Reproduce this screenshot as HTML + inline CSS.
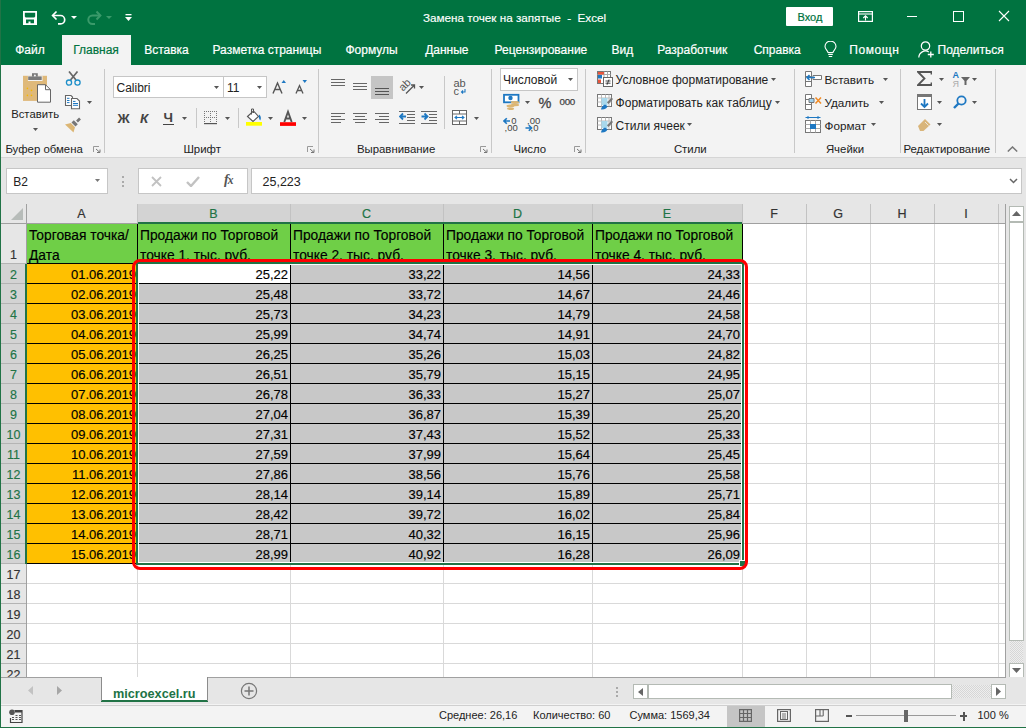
<!DOCTYPE html><html><head><meta charset="utf-8"><style>
*{box-sizing:border-box;margin:0;padding:0}
html,body{width:1026px;height:728px;overflow:hidden;background:#fff;font-family:"Liberation Sans",sans-serif}
.a{position:absolute}
.t{position:absolute;white-space:nowrap;line-height:1}
.r{position:absolute;white-space:nowrap;line-height:1;text-align:right;-webkit-text-stroke:0.15px #000}
</style></head><body><div class="a" style="left:0px;top:0px;width:1026px;height:65px;background:#007340;"></div>
<div class="t" style="left:423px;top:12px;font-size:11.7px;color:#fff;-webkit-text-stroke:0.15px #fff">Замена точек на запятые&nbsp; -&nbsp; Excel</div>
<svg class="a" style="left:22px;top:10px" width="16" height="16" viewBox="0 0 16 16">
      <path fill-rule="evenodd" fill="#fff" d="M1 1H15V15H1Z M2.8 2.8H13.2V6.6L12.3 7.6H3.7L2.8 6.6Z M4 9.4H12V13.2H8.5V11.6H6.5V13.2H4Z"/>
    </svg>
<svg class="a" style="left:51px;top:10px" width="16" height="15" viewBox="0 0 16 15">
      <path d="M2 5.5h7.5a4.2 4.2 0 0 1 0 8.4H7" fill="none" stroke="#fff" stroke-width="1.7"/>
      <path d="M5.5 1.5L1.6 5.5 5.5 9.5" fill="none" stroke="#fff" stroke-width="1.7"/>
    </svg>
<svg class="a" style="left:71px;top:16px" width="6" height="3"><polygon points="0,0 6,0 3,3" fill="#fff"/></svg>
<svg class="a" style="left:86px;top:10px" width="16" height="15" viewBox="0 0 16 15">
      <path d="M14 5.5H6.5a4.2 4.2 0 0 0 0 8.4H9" fill="none" stroke="#3a9a6a" stroke-width="2"/>
      <path d="M10.5 1.5L14.4 5.5 10.5 9.5" fill="none" stroke="#3a9a6a" stroke-width="2"/>
    </svg>
<svg class="a" style="left:106px;top:16px" width="6" height="3"><polygon points="0,0 6,0 3,3" fill="#3a9a6a"/></svg>
<svg class="a" style="left:125px;top:14px" width="7" height="8"><rect x="0.5" y="0" width="6" height="1.3" fill="#fff"/><polygon points="0,3 7,3 3.5,7" fill="#fff"/></svg>
<div class="a" style="left:786px;top:7px;width:47px;height:19px;background:#fff;border-radius:1px"></div>
<div class="t" style="left:797.5px;top:11.8px;font-size:11px;color:#007340;-webkit-text-stroke:0.2px #007340">Вход</div>
<svg class="a" style="left:858px;top:11px" width="15" height="11" viewBox="0 0 15 11">
      <rect x="0.6" y="0.6" width="13.8" height="9.8" fill="none" stroke="#fff" stroke-width="1.2"/>
      <line x1="0.6" y1="3" x2="14.4" y2="3" stroke="#fff" stroke-width="1.1"/>
      <path d="M7.5 9.5V5M5.3 7L7.5 4.8 9.7 7" fill="none" stroke="#fff" stroke-width="1.1"/>
    </svg>
<div class="a" style="left:907px;top:16px;width:10px;height:1px;background:#fff;"></div>
<div class="a" style="left:953px;top:11px;width:11px;height:11px;border:1px solid #fff"></div>
<svg class="a" style="left:998px;top:10px" width="12" height="12"><path d="M1 1L11 11M11 1L1 11" stroke="#fff" stroke-width="1.1"/></svg>
<div class="a" style="left:62px;top:35px;width:69px;height:30px;background:#f3f3f3;"></div>
<div class="t" style="left:15.2px;top:44.2px;font-size:12px;color:#fff;-webkit-text-stroke:0.2px #fff">Файл</div>
<div class="t" style="left:73.2px;top:44.2px;font-size:12px;color:#007340;-webkit-text-stroke:0.2px #007340">Главная</div>
<div class="t" style="left:144.2px;top:44.2px;font-size:12px;color:#fff;-webkit-text-stroke:0.2px #fff">Вставка</div>
<div class="t" style="left:212.5px;top:44.2px;font-size:12px;color:#fff;-webkit-text-stroke:0.2px #fff">Разметка страницы</div>
<div class="t" style="left:345.5px;top:44.2px;font-size:12px;color:#fff;-webkit-text-stroke:0.2px #fff">Формулы</div>
<div class="t" style="left:425.2px;top:44.2px;font-size:12px;color:#fff;-webkit-text-stroke:0.2px #fff">Данные</div>
<div class="t" style="left:494.59999999999997px;top:44.2px;font-size:12px;color:#fff;-webkit-text-stroke:0.2px #fff">Рецензирование</div>
<div class="t" style="left:611.5px;top:44.2px;font-size:12px;color:#fff;-webkit-text-stroke:0.2px #fff">Вид</div>
<div class="t" style="left:657.2px;top:44.2px;font-size:12px;color:#fff;-webkit-text-stroke:0.2px #fff">Разработчик</div>
<div class="t" style="left:753.7px;top:44.2px;font-size:12px;color:#fff;-webkit-text-stroke:0.2px #fff">Справка</div>
<div class="t" style="left:849.2px;top:44.2px;font-size:12px;color:#fff;-webkit-text-stroke:0.2px #fff;letter-spacing:0.6px">Помощн</div>
<div class="t" style="left:937.5px;top:44.2px;font-size:12px;color:#fff;-webkit-text-stroke:0.2px #fff">Поделиться</div>
<svg class="a" style="left:824px;top:41px" width="13" height="17" viewBox="0 0 13 17">
      <path d="M4 11.5C3.8 9.5 1 8.3 1 5.6a5.5 5.5 0 0 1 11 0c0 2.7-2.8 3.9-3 5.9z" fill="none" stroke="#fff" stroke-width="1.1"/>
      <path d="M4.2 13.4h4.6M4.8 15.5h3.4" stroke="#fff" stroke-width="1.1"/>
    </svg>
<svg class="a" style="left:918px;top:41px" width="17" height="17" viewBox="0 0 17 17">
      <circle cx="7.5" cy="5" r="4.2" fill="none" stroke="#fff" stroke-width="1.2"/>
      <path d="M0.8 16.5a6.7 6.7 0 0 1 10-5.6" fill="none" stroke="#fff" stroke-width="1.2"/>
      <path d="M12.8 10.5v6M9.8 13.5h6" stroke="#fff" stroke-width="1.3"/>
    </svg>
<div class="a" style="left:1px;top:65px;width:1025px;height:92px;background:#f3f3f3;"></div>
<div class="a" style="left:1px;top:157px;width:1025px;height:1px;background:#d5d5d5;"></div>
<div class="a" style="left:104px;top:69px;width:1px;height:84px;background:#c8c8c8;"></div>
<div class="a" style="left:318px;top:69px;width:1px;height:84px;background:#c8c8c8;"></div>
<div class="a" style="left:491px;top:69px;width:1px;height:84px;background:#c8c8c8;"></div>
<div class="a" style="left:585px;top:69px;width:1px;height:84px;background:#c8c8c8;"></div>
<div class="a" style="left:794px;top:69px;width:1px;height:84px;background:#c8c8c8;"></div>
<div class="a" style="left:900px;top:69px;width:1px;height:84px;background:#c8c8c8;"></div>
<div class="a" style="left:995px;top:69px;width:1px;height:84px;background:#c8c8c8;"></div>
<div class="t" style="left:5.4px;top:143.8px;font-size:11.4px;color:#222;">Буфер обмена</div>
<div class="t" style="left:183.4px;top:143.8px;font-size:11.4px;color:#222;">Шрифт</div>
<div class="t" style="left:356.9px;top:143.8px;font-size:11.4px;color:#222;">Выравнивание</div>
<div class="t" style="left:513.4px;top:143.8px;font-size:11.4px;color:#222;">Число</div>
<div class="t" style="left:673.9px;top:143.8px;font-size:11.4px;color:#222;">Стили</div>
<div class="t" style="left:825.9px;top:143.8px;font-size:11.4px;color:#222;">Ячейки</div>
<div class="t" style="left:903.4px;top:143.8px;font-size:11.4px;color:#222;">Редактирование</div>
<svg class="a" style="left:93px;top:146px" width="8" height="7" viewBox="0 0 8 7"><path d="M0.5 6V0.5H6" fill="none" stroke="#999" stroke-width="1"/><path d="M3 3L7 6.5M7 3.5v3H4" fill="none" stroke="#777" stroke-width="1"/></svg>
<svg class="a" style="left:307px;top:146px" width="8" height="7" viewBox="0 0 8 7"><path d="M0.5 6V0.5H6" fill="none" stroke="#999" stroke-width="1"/><path d="M3 3L7 6.5M7 3.5v3H4" fill="none" stroke="#777" stroke-width="1"/></svg>
<svg class="a" style="left:480px;top:146px" width="8" height="7" viewBox="0 0 8 7"><path d="M0.5 6V0.5H6" fill="none" stroke="#999" stroke-width="1"/><path d="M3 3L7 6.5M7 3.5v3H4" fill="none" stroke="#777" stroke-width="1"/></svg>
<svg class="a" style="left:574px;top:146px" width="8" height="7" viewBox="0 0 8 7"><path d="M0.5 6V0.5H6" fill="none" stroke="#999" stroke-width="1"/><path d="M3 3L7 6.5M7 3.5v3H4" fill="none" stroke="#777" stroke-width="1"/></svg>
<svg class="a" style="left:1007px;top:146px" width="11" height="6"><path d="M0.8 5.5L5.5 1 10.2 5.5" fill="none" stroke="#777" stroke-width="1.5"/></svg>
<svg class="a" style="left:22px;top:72px" width="31" height="32" viewBox="0 0 31 32">
      <rect x="1" y="3.8" width="24" height="25.1" fill="#dfb97a"/>
      <rect x="5.9" y="3.8" width="14.6" height="5.2" fill="#f3f3f3"/>
      <rect x="6.2" y="4.4" width="13.5" height="3.6" fill="#7a7a7a"/>
      <rect x="10" y="1.2" width="5.8" height="3.4" fill="#7a7a7a"/>
      <circle cx="12.9" cy="3.6" r="1" fill="#f3f3f3"/>
      <path d="M15.5 12.7H23.5L28.5 17.7V30.2H15.5Z" fill="#fff" stroke="#666" stroke-width="1"/>
      <path d="M23.5 12.7V17.7H28.5" fill="none" stroke="#666" stroke-width="1"/>
      <circle cx="5.4" cy="16.4" r="0.8" fill="#f5b800"/><circle cx="9.5" cy="18.4" r="0.8" fill="#f5b800"/>
      <circle cx="5.4" cy="23.4" r="0.8" fill="#f5b800"/><circle cx="9.5" cy="23.4" r="0.8" fill="#f5b800"/>
    </svg>
<div class="t" style="left:11.2px;top:108.5px;font-size:11.3px;color:#222;">Вставить</div>
<svg class="a" style="left:33.0px;top:128.0px" width="5" height="3"><polygon points="0,0 5,0 2.5,3" fill="#555"/></svg>
<svg class="a" style="left:65px;top:71px" width="17" height="16" viewBox="0 0 17 16">
      <path d="M4 0.5L11 9M12.5 0.5L5.5 9" stroke="#666" stroke-width="1.7"/>
      <circle cx="4" cy="11.6" r="2.6" fill="none" stroke="#1e8fc9" stroke-width="1.3"/>
      <circle cx="12.5" cy="11.6" r="2.6" fill="none" stroke="#1e8fc9" stroke-width="1.3"/>
    </svg>
<svg class="a" style="left:64px;top:94px" width="17" height="16" viewBox="0 0 17 16">
      <path d="M1.5 1.5h5.5l1.5 1.5v8.5h-7z" fill="#fff" stroke="#666" stroke-width="1.1"/>
      <path d="M7.5 4.5h5.5l2.5 2.5v7.8h-8z" fill="#fff" stroke="#666" stroke-width="1.1"/>
      <path d="M3 4.3h2.5M3 6.5h2.5M3 8.6h2.5M9 7.4h2.5M9 9.5h5M9 11.3h5" stroke="#1e78c2" stroke-width="1"/>
    </svg>
<svg class="a" style="left:87.0px;top:100.5px" width="5" height="3"><polygon points="0,0 5,0 2.5,3" fill="#555"/></svg>
<svg class="a" style="left:64px;top:117px" width="18" height="16" viewBox="0 0 18 16">
      <path d="M13 4.5L16 1.5" stroke="#777" stroke-width="2.6"/>
      <path d="M7.5 5.5L11.5 9.5L13.8 7.2L9.8 3.2z" fill="#777"/>
      <path d="M1 7.5L6.8 6 11 10.2 9.5 15.5z" fill="#dcb674"/>
    </svg>
<div class="a" style="left:113px;top:76px;width:111px;height:22px;background:#fff;border:1px solid #c6c6c6"></div>
<div class="a" style="left:223px;top:76px;width:44px;height:22px;background:#fff;border:1px solid #c6c6c6"></div>
<div class="t" style="left:116.5px;top:81.6px;font-size:12px;color:#222;">Calibri</div>
<div class="t" style="left:227px;top:81.6px;font-size:12px;color:#222;">11</div>
<svg class="a" style="left:214.0px;top:85.5px" width="5" height="3"><polygon points="0,0 5,0 2.5,3" fill="#555"/></svg>
<svg class="a" style="left:257.0px;top:85.5px" width="5" height="3"><polygon points="0,0 5,0 2.5,3" fill="#555"/></svg>
<svg class="a" style="left:272px;top:80px" width="14" height="14" viewBox="0 0 14 14"><path d="M1 13.5L5.5 3 10 13.5M2.8 9.5h5.4" fill="none" stroke="#555" stroke-width="1.4"/><polygon points="9.5,3 14,3 11.75,0" fill="#1e78c2"/></svg>
<svg class="a" style="left:295px;top:80px" width="12" height="14" viewBox="0 0 12 14"><path d="M1 13.5L4.5 5.5 8 13.5M2.3 10.5h4.4" fill="none" stroke="#555" stroke-width="1.3"/><polygon points="7.5,0 12,0 9.75,3" fill="#1e78c2"/></svg>
<div class="t" style="left:117.5px;top:111.5px;font-size:13.5px;color:#444;font-weight:bold">Ж</div>
<div class="t" style="left:140px;top:111.5px;font-size:13.5px;color:#444;font-weight:bold;font-style:italic">К</div>
<div class="t" style="left:163.5px;top:110.5px;font-size:13.5px;color:#444;font-weight:bold">Ч</div>
<div class="a" style="left:163px;top:124px;width:11px;height:1px;background:#444;"></div>
<svg class="a" style="left:182.0px;top:116.5px" width="5" height="3"><polygon points="0,0 5,0 2.5,3" fill="#555"/></svg>
<div class="a" style="left:196px;top:108px;width:1px;height:20px;background:#c8c8c8;"></div>
<svg class="a" style="left:204px;top:111px" width="14" height="14" viewBox="0 0 14 14"><g fill="#777"><rect x="0" y="0" width="1" height="1"/><rect x="2" y="0" width="1" height="1"/><rect x="4" y="0" width="1" height="1"/><rect x="6" y="0" width="1" height="1"/><rect x="8" y="0" width="1" height="1"/><rect x="10" y="0" width="1" height="1"/><rect x="12" y="0" width="1" height="1"/><rect x="0" y="2" width="1" height="1"/><rect x="6" y="2" width="1" height="1"/><rect x="12" y="2" width="1" height="1"/><rect x="0" y="4" width="1" height="1"/><rect x="6" y="4" width="1" height="1"/><rect x="12" y="4" width="1" height="1"/><rect x="0" y="6" width="1" height="1"/><rect x="2" y="6" width="1" height="1"/><rect x="4" y="6" width="1" height="1"/><rect x="6" y="6" width="1" height="1"/><rect x="8" y="6" width="1" height="1"/><rect x="10" y="6" width="1" height="1"/><rect x="12" y="6" width="1" height="1"/><rect x="0" y="8" width="1" height="1"/><rect x="6" y="8" width="1" height="1"/><rect x="12" y="8" width="1" height="1"/><rect x="0" y="10" width="1" height="1"/><rect x="6" y="10" width="1" height="1"/><rect x="12" y="10" width="1" height="1"/></g><rect x="0" y="12" width="13" height="1.2" fill="#555"/></svg>
<svg class="a" style="left:224.5px;top:116.5px" width="5" height="3"><polygon points="0,0 5,0 2.5,3" fill="#555"/></svg>
<div class="a" style="left:238px;top:108px;width:1px;height:20px;background:#c8c8c8;"></div>
<svg class="a" style="left:245px;top:108px" width="18" height="19" viewBox="0 0 18 19"><path d="M2.5 8.5L8.5 3 13.5 8.5 8 13.5z" fill="#fff" stroke="#555" stroke-width="1.1"/><path d="M6.5 1v5.5M6.5 1h2v4" fill="none" stroke="#555" stroke-width="1"/><path d="M14 6.5c1.8 1.2 2.5 3.5 1.2 6-1-1-1.8-3.5-1.2-6z" fill="#1e78c2"/><rect x="1" y="14" width="16" height="3.7" fill="#ffff00"/></svg>
<svg class="a" style="left:267.5px;top:116.5px" width="5" height="3"><polygon points="0,0 5,0 2.5,3" fill="#555"/></svg>
<svg class="a" style="left:280px;top:109px" width="17" height="18" viewBox="0 0 17 18"><path d="M4.3 13L8 2.8 11.7 13M5.6 9.5h4.8" fill="none" stroke="#555" stroke-width="1.9"/><rect x="0" y="13.2" width="16" height="3.7" fill="#f00"/></svg>
<svg class="a" style="left:302.0px;top:116.5px" width="5" height="3"><polygon points="0,0 5,0 2.5,3" fill="#555"/></svg>
<div class="a" style="left:331px;top:79px;width:14px;height:1.3px;background:#666;"></div>
<div class="a" style="left:331px;top:82px;width:14px;height:1.3px;background:#666;"></div>
<div class="a" style="left:331px;top:85px;width:14px;height:1.3px;background:#666;"></div>
<div class="a" style="left:353px;top:83px;width:14px;height:1.3px;background:#666;"></div>
<div class="a" style="left:353px;top:86px;width:14px;height:1.3px;background:#666;"></div>
<div class="a" style="left:353px;top:89px;width:14px;height:1.3px;background:#666;"></div>
<div class="a" style="left:371px;top:76px;width:22px;height:23px;background:#c5c5c5;"></div>
<div class="a" style="left:375px;top:88px;width:14px;height:1.3px;background:#555;"></div>
<div class="a" style="left:375px;top:91px;width:14px;height:1.3px;background:#555;"></div>
<div class="a" style="left:375px;top:94px;width:14px;height:1.3px;background:#555;"></div>
<svg class="a" style="left:397px;top:76px" width="20" height="19" viewBox="0 0 20 19"><text x="1.5" y="13" font-family="Liberation Sans" font-size="11" fill="#555" transform="rotate(-45 7 9)">ab</text><path d="M9 17.5L17 9.5M14 9h3.5v3.5" fill="none" stroke="#555" stroke-width="1.3"/></svg>
<svg class="a" style="left:419.0px;top:85.5px" width="5" height="3"><polygon points="0,0 5,0 2.5,3" fill="#555"/></svg>
<div class="a" style="left:331px;top:113px;width:14px;height:1px;background:#666;"></div>
<div class="a" style="left:331px;top:116px;width:10px;height:1px;background:#666;"></div>
<div class="a" style="left:331px;top:119px;width:14px;height:1px;background:#666;"></div>
<div class="a" style="left:331px;top:122px;width:10px;height:1px;background:#666;"></div>
<div class="a" style="left:353px;top:113px;width:14px;height:1px;background:#666;"></div>
<div class="a" style="left:355px;top:116px;width:10px;height:1px;background:#666;"></div>
<div class="a" style="left:353px;top:119px;width:14px;height:1px;background:#666;"></div>
<div class="a" style="left:355px;top:122px;width:10px;height:1px;background:#666;"></div>
<div class="a" style="left:375px;top:113px;width:14px;height:1px;background:#666;"></div>
<div class="a" style="left:379px;top:116px;width:10px;height:1px;background:#666;"></div>
<div class="a" style="left:375px;top:119px;width:14px;height:1px;background:#666;"></div>
<div class="a" style="left:379px;top:122px;width:10px;height:1px;background:#666;"></div>
<div class="a" style="left:399px;top:111px;width:16px;height:1px;background:#666;"></div>
<div class="a" style="left:399px;top:123px;width:16px;height:1px;background:#666;"></div>
<div class="a" style="left:407px;top:114px;width:8px;height:1px;background:#666;"></div>
<div class="a" style="left:407px;top:117px;width:8px;height:1px;background:#666;"></div>
<div class="a" style="left:407px;top:120px;width:8px;height:1px;background:#666;"></div>
<svg class="a" style="left:399px;top:110px" width="8" height="13" viewBox="0 0 8 13"><path d="M1 6.5h6M4 3.5L1 6.5 4 9.5" fill="none" stroke="#1e78c2" stroke-width="1.8"/></svg>
<div class="a" style="left:421px;top:111px;width:16px;height:1px;background:#666;"></div>
<div class="a" style="left:421px;top:123px;width:16px;height:1px;background:#666;"></div>
<div class="a" style="left:429px;top:114px;width:8px;height:1px;background:#666;"></div>
<div class="a" style="left:429px;top:117px;width:8px;height:1px;background:#666;"></div>
<div class="a" style="left:429px;top:120px;width:8px;height:1px;background:#666;"></div>
<svg class="a" style="left:421px;top:110px" width="8" height="13" viewBox="0 0 8 13"><path d="M0.5 6.5h6M3.5 3.5L6.5 6.5 3.5 9.5" fill="none" stroke="#1e78c2" stroke-width="1.8"/></svg>
<div class="a" style="left:444px;top:76px;width:1px;height:53px;background:#c8c8c8;"></div>
<svg class="a" style="left:453px;top:77px" width="16" height="19" viewBox="0 0 16 19"><text x="0.5" y="9.5" font-family="Liberation Sans" font-size="11" fill="#555">ab</text><text x="0.5" y="17.5" font-family="Liberation Sans" font-size="11" fill="#555">c</text><path d="M12 12v3h-3.5M10 13.5l-1.5 1.5 1.5 1.5" fill="none" stroke="#1e78c2" stroke-width="1.1"/></svg>
<svg class="a" style="left:452px;top:110px" width="15" height="15" viewBox="0 0 15 15"><rect x="0.5" y="0.5" width="14" height="14" fill="#fff" stroke="#666" stroke-width="1"/><path d="M0.5 4h14M0.5 11h14M7.5 0.5v3.5M7.5 11v3.5" stroke="#666" stroke-width="1"/><path d="M3 7.5h9M5 5.8L3 7.5 5 9.2M10 5.8L12 7.5 10 9.2" fill="none" stroke="#1e78c2" stroke-width="1.1"/></svg>
<svg class="a" style="left:474.0px;top:116.5px" width="5" height="3"><polygon points="0,0 5,0 2.5,3" fill="#555"/></svg>
<div class="a" style="left:500px;top:68px;width:78px;height:23px;background:#fff;border:1px solid #c6c6c6"></div>
<div class="t" style="left:503px;top:73.6px;font-size:12px;color:#222;">Числовой</div>
<svg class="a" style="left:568.0px;top:78.0px" width="5" height="3"><polygon points="0,0 5,0 2.5,3" fill="#555"/></svg>
<svg class="a" style="left:502px;top:93px" width="19" height="18" viewBox="0 0 19 18"><rect x="2" y="1.8" width="14.5" height="7.5" fill="#fff" stroke="#1e78c2" stroke-width="1.8"/><circle cx="8.5" cy="5" r="2.2" fill="#1e78c2"/><ellipse cx="13" cy="9.5" rx="4.2" ry="1.4" fill="#dcb674"/><ellipse cx="13" cy="12" rx="4.2" ry="1.2" fill="#dcb674"/><ellipse cx="8.5" cy="13" rx="4" ry="1.4" fill="#dcb674"/><ellipse cx="8.5" cy="15.8" rx="3.6" ry="1.2" fill="#dcb674"/></svg>
<svg class="a" style="left:525.0px;top:100.5px" width="5" height="3"><polygon points="0,0 5,0 2.5,3" fill="#555"/></svg>
<div class="t" style="left:538.5px;top:96px;font-size:14.5px;color:#444;-webkit-text-stroke:0.3px #444">%</div>
<div class="t" style="left:559.5px;top:96.5px;font-size:9.8px;color:#444;-webkit-text-stroke:0.25px #444;letter-spacing:-0.3px">000</div>
<svg class="a" style="left:503px;top:116px" width="16" height="17" viewBox="0 0 16 17"><path d="M1 5h6M3.8 2.2L1 5 3.8 7.8" fill="none" stroke="#1e78c2" stroke-width="1.6"/><text x="8.3" y="8" font-family="Liberation Sans" font-size="9.5" fill="#444">0</text><text x="1.5" y="15" font-family="Liberation Sans" font-size="9.5" fill="#444">,00</text></svg>
<svg class="a" style="left:525px;top:116px" width="16" height="17" viewBox="0 0 16 17"><text x="2" y="8" font-family="Liberation Sans" font-size="9.5" fill="#444">,00</text><path d="M0.5 12h6M3.8 9.2L6.6 12 3.8 14.8" fill="none" stroke="#1e78c2" stroke-width="1.6"/><text x="5.5" y="15" font-family="Liberation Sans" font-size="9.5" fill="#444">,0</text></svg>
<div class="a" style="left:585px;top:69px;width:1px;height:84px;background:#c8c8c8;"></div>
<svg class="a" style="left:596px;top:70px" width="18" height="18" viewBox="0 0 18 18"><rect x="1.5" y="1.5" width="13" height="12" fill="#fff" stroke="#777" stroke-width="1"/><path d="M1.5 4.5h13M8 1.5v12M11.5 1.5v12" stroke="#aaa" stroke-width="1"/><rect x="2" y="2" width="6" height="2.5" fill="#e8553c"/><rect x="2" y="5" width="4" height="3.5" fill="#1e78c2"/><rect x="2" y="9.5" width="3" height="3.5" fill="#e8553c"/><rect x="7.5" y="7.5" width="9" height="9" fill="#fff" stroke="#666" stroke-width="1"/><path d="M9.5 11h5M9.5 13.2h5M13 9.5L11 14.8" stroke="#333" stroke-width="0.9"/></svg>
<svg class="a" style="left:596px;top:93px" width="18" height="18" viewBox="0 0 18 18"><rect x="1.5" y="1.5" width="14" height="12" fill="#fff" stroke="#777" stroke-width="1"/><path d="M1.5 5h14M1.5 9h14M5.5 1.5v12M9.5 1.5v12M13 1.5v12" stroke="#bbb" stroke-width="1"/><rect x="5.5" y="5" width="6" height="7" fill="#a8d8ec"/><path d="M11 9.5L15.5 4.5 17 6 12.5 11z" fill="#777"/><path d="M5 16.5c0.3-2.5 2-4.5 4-5l2.5 1.5c-0.5 2.2-2.5 3.8-6.5 3.5z" fill="#1e78c2"/></svg>
<svg class="a" style="left:596px;top:116px" width="18" height="18" viewBox="0 0 18 18"><rect x="1.5" y="1.5" width="14" height="12" fill="#fff" stroke="#777" stroke-width="1"/><path d="M1.5 5h14M1.5 9h14M5.5 1.5v12M9.5 1.5v12M13 1.5v12" stroke="#bbb" stroke-width="1"/><rect x="5.5" y="5" width="6" height="7" fill="#a8d8ec"/><path d="M11 9.5L15.5 4.5 17 6 12.5 11z" fill="#777"/><path d="M5 16.5c0.3-2.5 2-4.5 4-5l2.5 1.5c-0.5 2.2-2.5 3.8-6.5 3.5z" fill="#1e78c2"/></svg>
<div class="t" style="left:615.6px;top:74px;font-size:12px;color:#222;">Условное форматирование</div>
<svg class="a" style="left:771.0px;top:78.0px" width="5" height="3"><polygon points="0,0 5,0 2.5,3" fill="#555"/></svg>
<div class="t" style="left:615.6px;top:97px;font-size:12px;color:#222;">Форматировать как таблицу</div>
<svg class="a" style="left:775.0px;top:100.5px" width="5" height="3"><polygon points="0,0 5,0 2.5,3" fill="#555"/></svg>
<div class="t" style="left:615.6px;top:119.5px;font-size:12px;color:#222;">Стили ячеек</div>
<svg class="a" style="left:686.5px;top:123.0px" width="5" height="3"><polygon points="0,0 5,0 2.5,3" fill="#555"/></svg>
<svg class="a" style="left:805px;top:71px" width="17" height="16" viewBox="0 0 17 16"><path d="M0.5 0.5h6v15h-6zM0.5 5.5h6M0.5 10.5h6" fill="#fff" stroke="#777" stroke-width="1"/><path d="M8 4.5h8.5v4H8z" fill="#fff" stroke="#777" stroke-width="1"/><path d="M2 6.5h8M4.5 4L2 6.5 4.5 9" fill="none" stroke="#1e78c2" stroke-width="1.5"/></svg>
<svg class="a" style="left:805px;top:94px" width="17" height="16" viewBox="0 0 17 16"><path d="M0.5 0.5h6v15h-6zM0.5 5.5h6M0.5 10.5h6" fill="#fff" stroke="#777" stroke-width="1"/><path d="M4 4.5h5v4H4z" fill="#9fd0ec" stroke="#777" stroke-width="1"/><path d="M10.5 3.5l5.5 6M16 3.5l-5.5 6" stroke="#f08a24" stroke-width="1.5"/></svg>
<svg class="a" style="left:805px;top:116px" width="17" height="17" viewBox="0 0 17 17"><path d="M0.5 1.5h15M3 0v3M13 0v3" stroke="#1e78c2" stroke-width="1"/><rect x="0.5" y="4.5" width="15" height="12" fill="#fff" stroke="#777" stroke-width="1"/><path d="M0.5 8.5h15M0.5 12.5h15M5.5 4.5v12M10.5 4.5v12" stroke="#aaa" stroke-width="1"/><rect x="5" y="8" width="6" height="5" fill="#1e78c2"/></svg>
<div class="t" style="left:824.5px;top:74px;font-size:11.7px;color:#222;">Вставить</div>
<svg class="a" style="left:883.0px;top:78.0px" width="5" height="3"><polygon points="0,0 5,0 2.5,3" fill="#555"/></svg>
<div class="t" style="left:824.5px;top:97px;font-size:11.7px;color:#222;">Удалить</div>
<svg class="a" style="left:879.0px;top:100.5px" width="5" height="3"><polygon points="0,0 5,0 2.5,3" fill="#555"/></svg>
<div class="t" style="left:824.5px;top:119.5px;font-size:11.7px;color:#222;">Формат</div>
<svg class="a" style="left:871.0px;top:123.0px" width="5" height="3"><polygon points="0,0 5,0 2.5,3" fill="#555"/></svg>
<svg class="a" style="left:917px;top:71px" width="15" height="15" viewBox="0 0 15 15"><path d="M14.5 3.5V1H1l6.5 6.5L1 14h13.5v-2.5" fill="none" stroke="#555" stroke-width="1.8"/></svg>
<svg class="a" style="left:939.0px;top:78.0px" width="5" height="3"><polygon points="0,0 5,0 2.5,3" fill="#555"/></svg>
<svg class="a" style="left:952px;top:70px" width="20" height="18" viewBox="0 0 20 18"><text x="0.5" y="8" font-family="Liberation Sans" font-size="9" font-weight="bold" fill="#1e78c2">A</text><text x="0.5" y="17" font-family="Liberation Sans" font-size="9" fill="#aaa">Я</text><polygon points="9,7 18,7 14.5,11 14.5,15 12.5,15 12.5,11" fill="#666"/></svg>
<svg class="a" style="left:972.0px;top:78.0px" width="5" height="3"><polygon points="0,0 5,0 2.5,3" fill="#555"/></svg>
<svg class="a" style="left:917px;top:94px" width="15" height="16" viewBox="0 0 15 16"><rect x="0.5" y="0.5" width="14" height="15" fill="#fff" stroke="#777" stroke-width="1"/><rect x="0.5" y="0.5" width="14" height="2.5" fill="#777"/><path d="M7.5 5v8M4 9.5L7.5 13 11 9.5" fill="none" stroke="#1e78c2" stroke-width="1.8"/></svg>
<svg class="a" style="left:937.0px;top:100.5px" width="5" height="3"><polygon points="0,0 5,0 2.5,3" fill="#555"/></svg>
<svg class="a" style="left:953px;top:95px" width="14" height="14" viewBox="0 0 14 14"><circle cx="8.5" cy="5.5" r="4.2" fill="none" stroke="#1e78c2" stroke-width="1.8"/><path d="M5.5 8.5L1 13" stroke="#1e78c2" stroke-width="2.4"/></svg>
<svg class="a" style="left:972.0px;top:100.5px" width="5" height="3"><polygon points="0,0 5,0 2.5,3" fill="#555"/></svg>
<svg class="a" style="left:917px;top:118px" width="15" height="14" viewBox="0 0 15 14"><path d="M1 9L8 2 13.5 7.5 6.5 14 3 14z" fill="#d9b57a" transform="translate(0,-1)"/><path d="M8 4L11.5 7.5" stroke="#f3f3f3" stroke-width="0.8"/></svg>
<svg class="a" style="left:937.0px;top:123.0px" width="5" height="3"><polygon points="0,0 5,0 2.5,3" fill="#555"/></svg>
<div class="a" style="left:1px;top:158px;width:1025px;height:46px;background:#e6e6e6;"></div>
<div class="a" style="left:6px;top:168px;width:102px;height:26px;background:#fff;border:1px solid #c6c6c6"></div>
<div class="t" style="left:13.3px;top:175.6px;font-size:12px;color:#222;">B2</div>
<svg class="a" style="left:94.5px;top:178.5px" width="5" height="3"><polygon points="0,0 5,0 2.5,3" fill="#777"/></svg>
<div class="a" style="left:122px;top:176px;width:2px;height:2px;background:#aaa;"></div>
<div class="a" style="left:122px;top:180.5px;width:2px;height:2px;background:#aaa;"></div>
<div class="a" style="left:122px;top:185px;width:2px;height:2px;background:#aaa;"></div>
<div class="a" style="left:138px;top:168px;width:110px;height:26px;background:#fff;border:1px solid #c6c6c6"></div>
<svg class="a" style="left:151px;top:176px" width="11" height="11"><path d="M1 1L10 10M10 1L1 10" stroke="#c2c2c2" stroke-width="1.8"/></svg>
<svg class="a" style="left:186px;top:176px" width="14" height="11"><path d="M1 6L5 10 13 1" fill="none" stroke="#c2c2c2" stroke-width="2.4"/></svg>
<div class="t" style="left:224px;top:173px;font-family:'Liberation Serif';font-style:italic;font-weight:bold;font-size:14px;color:#555">f<span style="font-size:11.5px;margin-left:-1px">x</span></div>
<div class="a" style="left:251px;top:168px;width:771px;height:26px;background:#fff;border:1px solid #c6c6c6"></div>
<div class="t" style="left:262.5px;top:176px;font-size:12.5px;color:#222;">25,223</div>
<svg class="a" style="left:1009px;top:178px" width="9" height="6"><path d="M1 1L4.5 4.5 8 1" fill="none" stroke="#666" stroke-width="1.5"/></svg>
<div class="a" style="left:27px;top:224px;width:978px;height:453px;background:#fff;"></div>
<div class="a" style="left:1px;top:204px;width:1004px;height:19px;background:#e6e6e6;"></div>
<div class="a" style="left:138px;top:204px;width:604px;height:18px;background:#d3d3d3;"></div>
<div class="a" style="left:1px;top:224px;width:25px;height:453px;background:#e6e6e6;"></div>
<div class="a" style="left:1px;top:264px;width:25px;height:300px;background:#d3d3d3;"></div>
<div class="a" style="left:137px;top:224px;width:1px;height:453px;background:#d9d9d9;"></div>
<div class="a" style="left:290px;top:224px;width:1px;height:453px;background:#d9d9d9;"></div>
<div class="a" style="left:443px;top:224px;width:1px;height:453px;background:#d9d9d9;"></div>
<div class="a" style="left:592px;top:224px;width:1px;height:453px;background:#d9d9d9;"></div>
<div class="a" style="left:742px;top:224px;width:1px;height:453px;background:#d9d9d9;"></div>
<div class="a" style="left:806px;top:224px;width:1px;height:453px;background:#d9d9d9;"></div>
<div class="a" style="left:870px;top:224px;width:1px;height:453px;background:#d9d9d9;"></div>
<div class="a" style="left:934px;top:224px;width:1px;height:453px;background:#d9d9d9;"></div>
<div class="a" style="left:998px;top:224px;width:1px;height:453px;background:#d9d9d9;"></div>
<div class="a" style="left:27px;top:263px;width:978px;height:1px;background:#d9d9d9;"></div>
<div class="a" style="left:27px;top:283px;width:978px;height:1px;background:#d9d9d9;"></div>
<div class="a" style="left:27px;top:303px;width:978px;height:1px;background:#d9d9d9;"></div>
<div class="a" style="left:27px;top:323px;width:978px;height:1px;background:#d9d9d9;"></div>
<div class="a" style="left:27px;top:343px;width:978px;height:1px;background:#d9d9d9;"></div>
<div class="a" style="left:27px;top:363px;width:978px;height:1px;background:#d9d9d9;"></div>
<div class="a" style="left:27px;top:383px;width:978px;height:1px;background:#d9d9d9;"></div>
<div class="a" style="left:27px;top:403px;width:978px;height:1px;background:#d9d9d9;"></div>
<div class="a" style="left:27px;top:423px;width:978px;height:1px;background:#d9d9d9;"></div>
<div class="a" style="left:27px;top:443px;width:978px;height:1px;background:#d9d9d9;"></div>
<div class="a" style="left:27px;top:463px;width:978px;height:1px;background:#d9d9d9;"></div>
<div class="a" style="left:27px;top:483px;width:978px;height:1px;background:#d9d9d9;"></div>
<div class="a" style="left:27px;top:503px;width:978px;height:1px;background:#d9d9d9;"></div>
<div class="a" style="left:27px;top:523px;width:978px;height:1px;background:#d9d9d9;"></div>
<div class="a" style="left:27px;top:543px;width:978px;height:1px;background:#d9d9d9;"></div>
<div class="a" style="left:27px;top:563px;width:978px;height:1px;background:#d9d9d9;"></div>
<div class="a" style="left:27px;top:583px;width:978px;height:1px;background:#d9d9d9;"></div>
<div class="a" style="left:27px;top:603px;width:978px;height:1px;background:#d9d9d9;"></div>
<div class="a" style="left:27px;top:623px;width:978px;height:1px;background:#d9d9d9;"></div>
<div class="a" style="left:27px;top:643px;width:978px;height:1px;background:#d9d9d9;"></div>
<div class="a" style="left:27px;top:663px;width:978px;height:1px;background:#d9d9d9;"></div>
<div class="a" style="left:1005px;top:204px;width:1px;height:473px;background:#a0a0a0;"></div>
<div class="a" style="left:1px;top:677px;width:1005px;height:1px;background:#a0a0a0;"></div>
<div class="a" style="left:137px;top:204px;width:1px;height:19px;background:#c2c2c2;"></div>
<div class="a" style="left:290px;top:204px;width:1px;height:19px;background:#c2c2c2;"></div>
<div class="a" style="left:443px;top:204px;width:1px;height:19px;background:#c2c2c2;"></div>
<div class="a" style="left:592px;top:204px;width:1px;height:19px;background:#c2c2c2;"></div>
<div class="a" style="left:742px;top:204px;width:1px;height:19px;background:#c2c2c2;"></div>
<div class="a" style="left:806px;top:204px;width:1px;height:19px;background:#c2c2c2;"></div>
<div class="a" style="left:870px;top:204px;width:1px;height:19px;background:#c2c2c2;"></div>
<div class="a" style="left:934px;top:204px;width:1px;height:19px;background:#c2c2c2;"></div>
<div class="a" style="left:998px;top:204px;width:1px;height:19px;background:#c2c2c2;"></div>
<div class="a" style="left:1px;top:223px;width:1004px;height:1px;background:#a0a0a0;"></div>
<div class="a" style="left:138px;top:222px;width:604px;height:2px;background:#217346;"></div>
<div class="a" style="left:1px;top:263px;width:25px;height:1px;background:#b4b4b4;"></div>
<div class="a" style="left:1px;top:283px;width:25px;height:1px;background:#b4b4b4;"></div>
<div class="a" style="left:1px;top:303px;width:25px;height:1px;background:#b4b4b4;"></div>
<div class="a" style="left:1px;top:323px;width:25px;height:1px;background:#b4b4b4;"></div>
<div class="a" style="left:1px;top:343px;width:25px;height:1px;background:#b4b4b4;"></div>
<div class="a" style="left:1px;top:363px;width:25px;height:1px;background:#b4b4b4;"></div>
<div class="a" style="left:1px;top:383px;width:25px;height:1px;background:#b4b4b4;"></div>
<div class="a" style="left:1px;top:403px;width:25px;height:1px;background:#b4b4b4;"></div>
<div class="a" style="left:1px;top:423px;width:25px;height:1px;background:#b4b4b4;"></div>
<div class="a" style="left:1px;top:443px;width:25px;height:1px;background:#b4b4b4;"></div>
<div class="a" style="left:1px;top:463px;width:25px;height:1px;background:#b4b4b4;"></div>
<div class="a" style="left:1px;top:483px;width:25px;height:1px;background:#b4b4b4;"></div>
<div class="a" style="left:1px;top:503px;width:25px;height:1px;background:#b4b4b4;"></div>
<div class="a" style="left:1px;top:523px;width:25px;height:1px;background:#b4b4b4;"></div>
<div class="a" style="left:1px;top:543px;width:25px;height:1px;background:#b4b4b4;"></div>
<div class="a" style="left:1px;top:563px;width:25px;height:1px;background:#b4b4b4;"></div>
<div class="a" style="left:1px;top:583px;width:25px;height:1px;background:#b4b4b4;"></div>
<div class="a" style="left:1px;top:603px;width:25px;height:1px;background:#b4b4b4;"></div>
<div class="a" style="left:1px;top:623px;width:25px;height:1px;background:#b4b4b4;"></div>
<div class="a" style="left:1px;top:643px;width:25px;height:1px;background:#b4b4b4;"></div>
<div class="a" style="left:1px;top:663px;width:25px;height:1px;background:#b4b4b4;"></div>
<div class="a" style="left:26px;top:204px;width:1px;height:473px;background:#a0a0a0;"></div>
<div class="a" style="left:25px;top:264px;width:2px;height:300px;background:#217346;"></div>
<svg class="a" style="left:11px;top:208px" width="13" height="12"><polygon points="12,0 12,12 0,12" fill="#b7bcb9"/></svg>
<div class="t" style="left:61.5px;width:40px;text-align:center;top:208px;font-size:12.5px;color:#333;-webkit-text-stroke:0.2px #333">A</div>
<div class="t" style="left:193.5px;width:40px;text-align:center;top:208px;font-size:12.5px;color:#217346;-webkit-text-stroke:0.2px #217346">B</div>
<div class="t" style="left:346.5px;width:40px;text-align:center;top:208px;font-size:12.5px;color:#217346;-webkit-text-stroke:0.2px #217346">C</div>
<div class="t" style="left:497.5px;width:40px;text-align:center;top:208px;font-size:12.5px;color:#217346;-webkit-text-stroke:0.2px #217346">D</div>
<div class="t" style="left:647.0px;width:40px;text-align:center;top:208px;font-size:12.5px;color:#217346;-webkit-text-stroke:0.2px #217346">E</div>
<div class="t" style="left:754.0px;width:40px;text-align:center;top:208px;font-size:12.5px;color:#333;-webkit-text-stroke:0.2px #333">F</div>
<div class="t" style="left:818.0px;width:40px;text-align:center;top:208px;font-size:12.5px;color:#333;-webkit-text-stroke:0.2px #333">G</div>
<div class="t" style="left:882.0px;width:40px;text-align:center;top:208px;font-size:12.5px;color:#333;-webkit-text-stroke:0.2px #333">H</div>
<div class="t" style="left:946.0px;width:40px;text-align:center;top:208px;font-size:12.5px;color:#333;-webkit-text-stroke:0.2px #333">I</div>
<div class="t" style="left:1px;width:25px;text-align:center;top:249px;font-size:12.5px;color:#333;-webkit-text-stroke:0.15px #333">1</div>
<div class="t" style="left:1px;width:25px;text-align:center;top:269px;font-size:12.5px;color:#217346;-webkit-text-stroke:0.15px #217346">2</div>
<div class="t" style="left:1px;width:25px;text-align:center;top:289px;font-size:12.5px;color:#217346;-webkit-text-stroke:0.15px #217346">3</div>
<div class="t" style="left:1px;width:25px;text-align:center;top:309px;font-size:12.5px;color:#217346;-webkit-text-stroke:0.15px #217346">4</div>
<div class="t" style="left:1px;width:25px;text-align:center;top:329px;font-size:12.5px;color:#217346;-webkit-text-stroke:0.15px #217346">5</div>
<div class="t" style="left:1px;width:25px;text-align:center;top:349px;font-size:12.5px;color:#217346;-webkit-text-stroke:0.15px #217346">6</div>
<div class="t" style="left:1px;width:25px;text-align:center;top:369px;font-size:12.5px;color:#217346;-webkit-text-stroke:0.15px #217346">7</div>
<div class="t" style="left:1px;width:25px;text-align:center;top:389px;font-size:12.5px;color:#217346;-webkit-text-stroke:0.15px #217346">8</div>
<div class="t" style="left:1px;width:25px;text-align:center;top:409px;font-size:12.5px;color:#217346;-webkit-text-stroke:0.15px #217346">9</div>
<div class="t" style="left:1px;width:25px;text-align:center;top:429px;font-size:12.5px;color:#217346;-webkit-text-stroke:0.15px #217346">10</div>
<div class="t" style="left:1px;width:25px;text-align:center;top:449px;font-size:12.5px;color:#217346;-webkit-text-stroke:0.15px #217346">11</div>
<div class="t" style="left:1px;width:25px;text-align:center;top:469px;font-size:12.5px;color:#217346;-webkit-text-stroke:0.15px #217346">12</div>
<div class="t" style="left:1px;width:25px;text-align:center;top:489px;font-size:12.5px;color:#217346;-webkit-text-stroke:0.15px #217346">13</div>
<div class="t" style="left:1px;width:25px;text-align:center;top:509px;font-size:12.5px;color:#217346;-webkit-text-stroke:0.15px #217346">14</div>
<div class="t" style="left:1px;width:25px;text-align:center;top:529px;font-size:12.5px;color:#217346;-webkit-text-stroke:0.15px #217346">15</div>
<div class="t" style="left:1px;width:25px;text-align:center;top:549px;font-size:12.5px;color:#217346;-webkit-text-stroke:0.15px #217346">16</div>
<div class="t" style="left:1px;width:25px;text-align:center;top:569px;font-size:12.5px;color:#333;-webkit-text-stroke:0.15px #333">17</div>
<div class="t" style="left:1px;width:25px;text-align:center;top:589px;font-size:12.5px;color:#333;-webkit-text-stroke:0.15px #333">18</div>
<div class="t" style="left:1px;width:25px;text-align:center;top:609px;font-size:12.5px;color:#333;-webkit-text-stroke:0.15px #333">19</div>
<div class="t" style="left:1px;width:25px;text-align:center;top:629px;font-size:12.5px;color:#333;-webkit-text-stroke:0.15px #333">20</div>
<div class="t" style="left:1px;width:25px;text-align:center;top:649px;font-size:12.5px;color:#333;-webkit-text-stroke:0.15px #333">21</div>
<div class="t" style="left:1px;width:25px;text-align:center;top:669px;font-size:12.5px;color:#333;-webkit-text-stroke:0.15px #333">22</div>
<div class="a" style="left:27px;top:224px;width:110px;height:39px;background:#6fcf47;"></div>
<div class="a" style="left:138px;top:224px;width:152px;height:39px;background:#6fcf47;"></div>
<div class="a" style="left:291px;top:224px;width:152px;height:39px;background:#6fcf47;"></div>
<div class="a" style="left:444px;top:224px;width:148px;height:39px;background:#6fcf47;"></div>
<div class="a" style="left:593px;top:224px;width:149px;height:39px;background:#6fcf47;"></div>
<div class="a" style="left:27px;top:264px;width:110px;height:19px;background:#ffc000;"></div>
<div class="a" style="left:138px;top:264px;width:152px;height:19px;background:#fff;"></div>
<div class="a" style="left:291px;top:264px;width:152px;height:19px;background:#c8c8c8;"></div>
<div class="a" style="left:444px;top:264px;width:148px;height:19px;background:#c8c8c8;"></div>
<div class="a" style="left:593px;top:264px;width:149px;height:19px;background:#c8c8c8;"></div>
<div class="a" style="left:27px;top:284px;width:110px;height:19px;background:#ffc000;"></div>
<div class="a" style="left:138px;top:284px;width:152px;height:19px;background:#c8c8c8;"></div>
<div class="a" style="left:291px;top:284px;width:152px;height:19px;background:#c8c8c8;"></div>
<div class="a" style="left:444px;top:284px;width:148px;height:19px;background:#c8c8c8;"></div>
<div class="a" style="left:593px;top:284px;width:149px;height:19px;background:#c8c8c8;"></div>
<div class="a" style="left:27px;top:304px;width:110px;height:19px;background:#ffc000;"></div>
<div class="a" style="left:138px;top:304px;width:152px;height:19px;background:#c8c8c8;"></div>
<div class="a" style="left:291px;top:304px;width:152px;height:19px;background:#c8c8c8;"></div>
<div class="a" style="left:444px;top:304px;width:148px;height:19px;background:#c8c8c8;"></div>
<div class="a" style="left:593px;top:304px;width:149px;height:19px;background:#c8c8c8;"></div>
<div class="a" style="left:27px;top:324px;width:110px;height:19px;background:#ffc000;"></div>
<div class="a" style="left:138px;top:324px;width:152px;height:19px;background:#c8c8c8;"></div>
<div class="a" style="left:291px;top:324px;width:152px;height:19px;background:#c8c8c8;"></div>
<div class="a" style="left:444px;top:324px;width:148px;height:19px;background:#c8c8c8;"></div>
<div class="a" style="left:593px;top:324px;width:149px;height:19px;background:#c8c8c8;"></div>
<div class="a" style="left:27px;top:344px;width:110px;height:19px;background:#ffc000;"></div>
<div class="a" style="left:138px;top:344px;width:152px;height:19px;background:#c8c8c8;"></div>
<div class="a" style="left:291px;top:344px;width:152px;height:19px;background:#c8c8c8;"></div>
<div class="a" style="left:444px;top:344px;width:148px;height:19px;background:#c8c8c8;"></div>
<div class="a" style="left:593px;top:344px;width:149px;height:19px;background:#c8c8c8;"></div>
<div class="a" style="left:27px;top:364px;width:110px;height:19px;background:#ffc000;"></div>
<div class="a" style="left:138px;top:364px;width:152px;height:19px;background:#c8c8c8;"></div>
<div class="a" style="left:291px;top:364px;width:152px;height:19px;background:#c8c8c8;"></div>
<div class="a" style="left:444px;top:364px;width:148px;height:19px;background:#c8c8c8;"></div>
<div class="a" style="left:593px;top:364px;width:149px;height:19px;background:#c8c8c8;"></div>
<div class="a" style="left:27px;top:384px;width:110px;height:19px;background:#ffc000;"></div>
<div class="a" style="left:138px;top:384px;width:152px;height:19px;background:#c8c8c8;"></div>
<div class="a" style="left:291px;top:384px;width:152px;height:19px;background:#c8c8c8;"></div>
<div class="a" style="left:444px;top:384px;width:148px;height:19px;background:#c8c8c8;"></div>
<div class="a" style="left:593px;top:384px;width:149px;height:19px;background:#c8c8c8;"></div>
<div class="a" style="left:27px;top:404px;width:110px;height:19px;background:#ffc000;"></div>
<div class="a" style="left:138px;top:404px;width:152px;height:19px;background:#c8c8c8;"></div>
<div class="a" style="left:291px;top:404px;width:152px;height:19px;background:#c8c8c8;"></div>
<div class="a" style="left:444px;top:404px;width:148px;height:19px;background:#c8c8c8;"></div>
<div class="a" style="left:593px;top:404px;width:149px;height:19px;background:#c8c8c8;"></div>
<div class="a" style="left:27px;top:424px;width:110px;height:19px;background:#ffc000;"></div>
<div class="a" style="left:138px;top:424px;width:152px;height:19px;background:#c8c8c8;"></div>
<div class="a" style="left:291px;top:424px;width:152px;height:19px;background:#c8c8c8;"></div>
<div class="a" style="left:444px;top:424px;width:148px;height:19px;background:#c8c8c8;"></div>
<div class="a" style="left:593px;top:424px;width:149px;height:19px;background:#c8c8c8;"></div>
<div class="a" style="left:27px;top:444px;width:110px;height:19px;background:#ffc000;"></div>
<div class="a" style="left:138px;top:444px;width:152px;height:19px;background:#c8c8c8;"></div>
<div class="a" style="left:291px;top:444px;width:152px;height:19px;background:#c8c8c8;"></div>
<div class="a" style="left:444px;top:444px;width:148px;height:19px;background:#c8c8c8;"></div>
<div class="a" style="left:593px;top:444px;width:149px;height:19px;background:#c8c8c8;"></div>
<div class="a" style="left:27px;top:464px;width:110px;height:19px;background:#ffc000;"></div>
<div class="a" style="left:138px;top:464px;width:152px;height:19px;background:#c8c8c8;"></div>
<div class="a" style="left:291px;top:464px;width:152px;height:19px;background:#c8c8c8;"></div>
<div class="a" style="left:444px;top:464px;width:148px;height:19px;background:#c8c8c8;"></div>
<div class="a" style="left:593px;top:464px;width:149px;height:19px;background:#c8c8c8;"></div>
<div class="a" style="left:27px;top:484px;width:110px;height:19px;background:#ffc000;"></div>
<div class="a" style="left:138px;top:484px;width:152px;height:19px;background:#c8c8c8;"></div>
<div class="a" style="left:291px;top:484px;width:152px;height:19px;background:#c8c8c8;"></div>
<div class="a" style="left:444px;top:484px;width:148px;height:19px;background:#c8c8c8;"></div>
<div class="a" style="left:593px;top:484px;width:149px;height:19px;background:#c8c8c8;"></div>
<div class="a" style="left:27px;top:504px;width:110px;height:19px;background:#ffc000;"></div>
<div class="a" style="left:138px;top:504px;width:152px;height:19px;background:#c8c8c8;"></div>
<div class="a" style="left:291px;top:504px;width:152px;height:19px;background:#c8c8c8;"></div>
<div class="a" style="left:444px;top:504px;width:148px;height:19px;background:#c8c8c8;"></div>
<div class="a" style="left:593px;top:504px;width:149px;height:19px;background:#c8c8c8;"></div>
<div class="a" style="left:27px;top:524px;width:110px;height:19px;background:#ffc000;"></div>
<div class="a" style="left:138px;top:524px;width:152px;height:19px;background:#c8c8c8;"></div>
<div class="a" style="left:291px;top:524px;width:152px;height:19px;background:#c8c8c8;"></div>
<div class="a" style="left:444px;top:524px;width:148px;height:19px;background:#c8c8c8;"></div>
<div class="a" style="left:593px;top:524px;width:149px;height:19px;background:#c8c8c8;"></div>
<div class="a" style="left:27px;top:544px;width:110px;height:19px;background:#ffc000;"></div>
<div class="a" style="left:138px;top:544px;width:152px;height:19px;background:#c8c8c8;"></div>
<div class="a" style="left:291px;top:544px;width:152px;height:19px;background:#c8c8c8;"></div>
<div class="a" style="left:444px;top:544px;width:148px;height:19px;background:#c8c8c8;"></div>
<div class="a" style="left:593px;top:544px;width:149px;height:19px;background:#c8c8c8;"></div>
<div class="a" style="left:137px;top:224px;width:1px;height:340px;background:#000;"></div>
<div class="a" style="left:290px;top:224px;width:1px;height:340px;background:#000;"></div>
<div class="a" style="left:443px;top:224px;width:1px;height:340px;background:#000;"></div>
<div class="a" style="left:592px;top:224px;width:1px;height:340px;background:#000;"></div>
<div class="a" style="left:742px;top:224px;width:1px;height:340px;background:#000;"></div>
<div class="a" style="left:27px;top:263px;width:716px;height:1px;background:#000;"></div>
<div class="a" style="left:27px;top:283px;width:716px;height:1px;background:#000;"></div>
<div class="a" style="left:27px;top:303px;width:716px;height:1px;background:#000;"></div>
<div class="a" style="left:27px;top:323px;width:716px;height:1px;background:#000;"></div>
<div class="a" style="left:27px;top:343px;width:716px;height:1px;background:#000;"></div>
<div class="a" style="left:27px;top:363px;width:716px;height:1px;background:#000;"></div>
<div class="a" style="left:27px;top:383px;width:716px;height:1px;background:#000;"></div>
<div class="a" style="left:27px;top:403px;width:716px;height:1px;background:#000;"></div>
<div class="a" style="left:27px;top:423px;width:716px;height:1px;background:#000;"></div>
<div class="a" style="left:27px;top:443px;width:716px;height:1px;background:#000;"></div>
<div class="a" style="left:27px;top:463px;width:716px;height:1px;background:#000;"></div>
<div class="a" style="left:27px;top:483px;width:716px;height:1px;background:#000;"></div>
<div class="a" style="left:27px;top:503px;width:716px;height:1px;background:#000;"></div>
<div class="a" style="left:27px;top:523px;width:716px;height:1px;background:#000;"></div>
<div class="a" style="left:27px;top:543px;width:716px;height:1px;background:#000;"></div>
<div class="a" style="left:27px;top:563px;width:716px;height:1px;background:#000;"></div>
<div class="t" style="left:29px;top:229px;font-size:13.8px;color:#000;-webkit-text-stroke:0.15px #000">Торговая точка/</div>
<div class="t" style="left:29px;top:249px;font-size:13.8px;color:#000;-webkit-text-stroke:0.15px #000">Дата</div>
<div class="a" style="left:140px;top:224px;width:149px;height:39px;overflow:hidden"><div class="t" style="left:0;top:5px;font-size:13.8px;color:#000;-webkit-text-stroke:0.15px #000">Продажи по Торговой</div><div class="t" style="left:0;top:25px;font-size:13.8px;color:#000;-webkit-text-stroke:0.15px #000">точке 1, тыс. руб.</div></div>
<div class="a" style="left:293px;top:224px;width:149px;height:39px;overflow:hidden"><div class="t" style="left:0;top:5px;font-size:13.8px;color:#000;-webkit-text-stroke:0.15px #000">Продажи по Торговой</div><div class="t" style="left:0;top:25px;font-size:13.8px;color:#000;-webkit-text-stroke:0.15px #000">точке 2, тыс. руб.</div></div>
<div class="a" style="left:446px;top:224px;width:145px;height:39px;overflow:hidden"><div class="t" style="left:0;top:5px;font-size:13.8px;color:#000;-webkit-text-stroke:0.15px #000">Продажи по Торговой</div><div class="t" style="left:0;top:25px;font-size:13.8px;color:#000;-webkit-text-stroke:0.15px #000">точке 3, тыс. руб.</div></div>
<div class="a" style="left:595px;top:224px;width:146px;height:39px;overflow:hidden"><div class="t" style="left:0;top:5px;font-size:13.8px;color:#000;-webkit-text-stroke:0.15px #000">Продажи по Торговой</div><div class="t" style="left:0;top:25px;font-size:13.8px;color:#000;-webkit-text-stroke:0.15px #000">точке 4, тыс. руб.</div></div>
<div class="r" style="left:27px;width:109px;top:267.6px;font-size:13px">01.06.2019</div>
<div class="r" style="left:137px;width:151px;top:267.6px;font-size:13px">25,22</div>
<div class="r" style="left:290px;width:151px;top:267.6px;font-size:13px">33,22</div>
<div class="r" style="left:443px;width:147px;top:267.6px;font-size:13px">14,56</div>
<div class="r" style="left:592px;width:148px;top:267.6px;font-size:13px">24,33</div>
<div class="r" style="left:27px;width:109px;top:287.6px;font-size:13px">02.06.2019</div>
<div class="r" style="left:137px;width:151px;top:287.6px;font-size:13px">25,48</div>
<div class="r" style="left:290px;width:151px;top:287.6px;font-size:13px">33,72</div>
<div class="r" style="left:443px;width:147px;top:287.6px;font-size:13px">14,67</div>
<div class="r" style="left:592px;width:148px;top:287.6px;font-size:13px">24,46</div>
<div class="r" style="left:27px;width:109px;top:307.6px;font-size:13px">03.06.2019</div>
<div class="r" style="left:137px;width:151px;top:307.6px;font-size:13px">25,73</div>
<div class="r" style="left:290px;width:151px;top:307.6px;font-size:13px">34,23</div>
<div class="r" style="left:443px;width:147px;top:307.6px;font-size:13px">14,79</div>
<div class="r" style="left:592px;width:148px;top:307.6px;font-size:13px">24,58</div>
<div class="r" style="left:27px;width:109px;top:327.6px;font-size:13px">04.06.2019</div>
<div class="r" style="left:137px;width:151px;top:327.6px;font-size:13px">25,99</div>
<div class="r" style="left:290px;width:151px;top:327.6px;font-size:13px">34,74</div>
<div class="r" style="left:443px;width:147px;top:327.6px;font-size:13px">14,91</div>
<div class="r" style="left:592px;width:148px;top:327.6px;font-size:13px">24,70</div>
<div class="r" style="left:27px;width:109px;top:347.6px;font-size:13px">05.06.2019</div>
<div class="r" style="left:137px;width:151px;top:347.6px;font-size:13px">26,25</div>
<div class="r" style="left:290px;width:151px;top:347.6px;font-size:13px">35,26</div>
<div class="r" style="left:443px;width:147px;top:347.6px;font-size:13px">15,03</div>
<div class="r" style="left:592px;width:148px;top:347.6px;font-size:13px">24,82</div>
<div class="r" style="left:27px;width:109px;top:367.6px;font-size:13px">06.06.2019</div>
<div class="r" style="left:137px;width:151px;top:367.6px;font-size:13px">26,51</div>
<div class="r" style="left:290px;width:151px;top:367.6px;font-size:13px">35,79</div>
<div class="r" style="left:443px;width:147px;top:367.6px;font-size:13px">15,15</div>
<div class="r" style="left:592px;width:148px;top:367.6px;font-size:13px">24,95</div>
<div class="r" style="left:27px;width:109px;top:387.6px;font-size:13px">07.06.2019</div>
<div class="r" style="left:137px;width:151px;top:387.6px;font-size:13px">26,78</div>
<div class="r" style="left:290px;width:151px;top:387.6px;font-size:13px">36,33</div>
<div class="r" style="left:443px;width:147px;top:387.6px;font-size:13px">15,27</div>
<div class="r" style="left:592px;width:148px;top:387.6px;font-size:13px">25,07</div>
<div class="r" style="left:27px;width:109px;top:407.6px;font-size:13px">08.06.2019</div>
<div class="r" style="left:137px;width:151px;top:407.6px;font-size:13px">27,04</div>
<div class="r" style="left:290px;width:151px;top:407.6px;font-size:13px">36,87</div>
<div class="r" style="left:443px;width:147px;top:407.6px;font-size:13px">15,39</div>
<div class="r" style="left:592px;width:148px;top:407.6px;font-size:13px">25,20</div>
<div class="r" style="left:27px;width:109px;top:427.6px;font-size:13px">09.06.2019</div>
<div class="r" style="left:137px;width:151px;top:427.6px;font-size:13px">27,31</div>
<div class="r" style="left:290px;width:151px;top:427.6px;font-size:13px">37,43</div>
<div class="r" style="left:443px;width:147px;top:427.6px;font-size:13px">15,52</div>
<div class="r" style="left:592px;width:148px;top:427.6px;font-size:13px">25,33</div>
<div class="r" style="left:27px;width:109px;top:447.6px;font-size:13px">10.06.2019</div>
<div class="r" style="left:137px;width:151px;top:447.6px;font-size:13px">27,59</div>
<div class="r" style="left:290px;width:151px;top:447.6px;font-size:13px">37,99</div>
<div class="r" style="left:443px;width:147px;top:447.6px;font-size:13px">15,64</div>
<div class="r" style="left:592px;width:148px;top:447.6px;font-size:13px">25,45</div>
<div class="r" style="left:27px;width:109px;top:467.6px;font-size:13px">11.06.2019</div>
<div class="r" style="left:137px;width:151px;top:467.6px;font-size:13px">27,86</div>
<div class="r" style="left:290px;width:151px;top:467.6px;font-size:13px">38,56</div>
<div class="r" style="left:443px;width:147px;top:467.6px;font-size:13px">15,76</div>
<div class="r" style="left:592px;width:148px;top:467.6px;font-size:13px">25,58</div>
<div class="r" style="left:27px;width:109px;top:487.6px;font-size:13px">12.06.2019</div>
<div class="r" style="left:137px;width:151px;top:487.6px;font-size:13px">28,14</div>
<div class="r" style="left:290px;width:151px;top:487.6px;font-size:13px">39,14</div>
<div class="r" style="left:443px;width:147px;top:487.6px;font-size:13px">15,89</div>
<div class="r" style="left:592px;width:148px;top:487.6px;font-size:13px">25,71</div>
<div class="r" style="left:27px;width:109px;top:507.6px;font-size:13px">13.06.2019</div>
<div class="r" style="left:137px;width:151px;top:507.6px;font-size:13px">28,42</div>
<div class="r" style="left:290px;width:151px;top:507.6px;font-size:13px">39,72</div>
<div class="r" style="left:443px;width:147px;top:507.6px;font-size:13px">16,02</div>
<div class="r" style="left:592px;width:148px;top:507.6px;font-size:13px">25,84</div>
<div class="r" style="left:27px;width:109px;top:527.6px;font-size:13px">14.06.2019</div>
<div class="r" style="left:137px;width:151px;top:527.6px;font-size:13px">28,71</div>
<div class="r" style="left:290px;width:151px;top:527.6px;font-size:13px">40,32</div>
<div class="r" style="left:443px;width:147px;top:527.6px;font-size:13px">16,15</div>
<div class="r" style="left:592px;width:148px;top:527.6px;font-size:13px">25,96</div>
<div class="r" style="left:27px;width:109px;top:547.6px;font-size:13px">15.06.2019</div>
<div class="r" style="left:137px;width:151px;top:547.6px;font-size:13px">28,99</div>
<div class="r" style="left:290px;width:151px;top:547.6px;font-size:13px">40,92</div>
<div class="r" style="left:443px;width:147px;top:547.6px;font-size:13px">16,28</div>
<div class="r" style="left:592px;width:148px;top:547.6px;font-size:13px">26,09</div>
<div class="a" style="left:136px;top:262px;width:608px;height:2px;background:#217346;"></div>
<div class="a" style="left:136px;top:262px;width:608px;height:303px;border:2px solid #217346"></div>
<div class="a" style="left:138px;top:264px;width:604px;height:299px;border:1px solid #fff"></div>
<div class="a" style="left:739px;top:560px;width:7px;height:7px;background:#fff;"></div>
<div class="a" style="left:740px;top:561px;width:5px;height:5px;background:#217346;"></div>
<div class="a" style="left:132px;top:259px;width:616px;height:311px;border:3px solid #f00;border-radius:8px"></div>
<div class="a" style="left:1006px;top:204px;width:20px;height:473px;background:#e6e6e6;"></div>
<div class="a" style="left:1009px;top:206px;width:15px;height:16px;background:#fff;border:1px solid #b4bab4"></div>
<svg class="a" style="left:1012px;top:211px" width="9" height="5"><polygon points="0,5 9,5 4.5,0" fill="#666"/></svg>
<div class="a" style="left:1009px;top:222px;width:15px;height:419px;background:#fff;border:1px solid #b4bab4"></div>
<div class="a" style="left:1010px;top:641px;width:13px;height:22px;background:repeating-conic-gradient(#d6d6d6 0 25%,#eeeeee 0 50%) 0 0/2px 2px"></div>
<div class="a" style="left:1009px;top:663px;width:15px;height:15px;background:#fff;border:1px solid #b4bab4"></div>
<svg class="a" style="left:1012px;top:668px" width="9" height="5"><polygon points="0,0 9,0 4.5,5" fill="#666"/></svg>
<div class="a" style="left:1px;top:677px;width:1025px;height:27px;background:#e6e6e6;"></div>
<div class="a" style="left:1px;top:677px;width:1005px;height:1px;background:#a0a0a0;"></div>
<svg class="a" style="left:28px;top:686px" width="5" height="9"><polygon points="5,0 5,9 0,4.5" fill="#c2c2c2"/></svg>
<svg class="a" style="left:57px;top:686px" width="5" height="9"><polygon points="0,0 0,9 5,4.5" fill="#a6a6a6"/></svg>
<div class="a" style="left:101px;top:677px;width:107px;height:23px;background:#fff;"></div>
<div class="a" style="left:101px;top:700px;width:107px;height:2px;background:#217346;"></div>
<div class="a" style="left:101px;top:677px;width:1px;height:24px;background:#8c8c8c;"></div>
<div class="a" style="left:207px;top:677px;width:1px;height:24px;background:#8c8c8c;"></div>
<div class="t" style="left:113px;top:687.5px;font-size:12.7px;color:#217346;font-weight:bold">microexcel.ru</div>
<svg class="a" style="left:240px;top:682px" width="18" height="18" viewBox="0 0 18 18"><circle cx="9" cy="9" r="7.6" fill="none" stroke="#777" stroke-width="1.2"/><path d="M9 4.5v9M4.5 9h9" stroke="#777" stroke-width="1.5"/></svg>
<div class="a" style="left:616px;top:686.5px;width:2px;height:2px;background:#aaa;"></div>
<div class="a" style="left:616px;top:690.5px;width:2px;height:2px;background:#aaa;"></div>
<div class="a" style="left:616px;top:694.5px;width:2px;height:2px;background:#aaa;"></div>
<div class="a" style="left:633px;top:684px;width:15px;height:15px;background:#fff;border:1px solid #b4bab4"></div>
<svg class="a" style="left:638px;top:688px" width="5" height="8"><polygon points="5,0 5,8 0,4" fill="#666"/></svg>
<div class="a" style="left:648px;top:684px;width:304px;height:15px;background:#fff;border:1px solid #b4bab4"></div>
<div class="a" style="left:952px;top:685px;width:39px;height:13px;background:repeating-conic-gradient(#d6d6d6 0 25%,#eeeeee 0 50%) 0 0/2px 2px"></div>
<div class="a" style="left:991px;top:684px;width:15px;height:15px;background:#fff;border:1px solid #b4bab4"></div>
<svg class="a" style="left:996px;top:687px" width="5" height="9"><polygon points="0,0 0,9 5,4.5" fill="#666"/></svg>
<div class="a" style="left:1px;top:704px;width:1025px;height:23px;background:#f3f3f3;"></div>
<div class="a" style="left:1px;top:705px;width:1025px;height:1px;background:#cfcfcf;"></div>
<svg class="a" style="left:9px;top:709px" width="14" height="14" viewBox="0 0 14 14"><path d="M1.5 9v4.5h11.5v-12H5.5" fill="none" stroke="#444" stroke-width="1.2"/><rect x="6" y="1.5" width="7" height="2" fill="#444"/><path d="M3 8.5h2M6.5 8.5h2M10 8.5h2M3 10.5h2M6.5 10.5h2M10 10.5h2M6.5 6.5h2M10 6.5h2" stroke="#444" stroke-width="0.9"/><circle cx="3" cy="3.2" r="2.8" fill="#555"/></svg>
<div class="t" style="left:439px;top:709.5px;font-size:11px;color:#222;">Среднее: 26,16</div>
<div class="t" style="left:533px;top:709.5px;font-size:11px;color:#222;">Количество: 60</div>
<div class="t" style="left:629.5px;top:709.5px;font-size:11px;color:#222;">Сумма: 1569,34</div>
<div class="a" style="left:727px;top:706px;width:38px;height:21px;background:#c5c5c5;"></div>
<svg class="a" style="left:739px;top:709px" width="13" height="13" viewBox="0 0 13 13"><path d="M0.6 0.6h11.8v11.8H0.6zM0.6 4.5h11.8M0.6 8.5h11.8M4.5 0.6v11.8M8.5 0.6v11.8" fill="none" stroke="#666" stroke-width="1.2"/></svg>
<svg class="a" style="left:777px;top:709px" width="14" height="13" viewBox="0 0 14 13"><rect x="0.6" y="0.6" width="12.8" height="11.8" fill="none" stroke="#666" stroke-width="1.2"/><rect x="3.5" y="2.5" width="7" height="8" fill="none" stroke="#666" stroke-width="1"/><path d="M5 5h4M5 7h4M5 9h4" stroke="#666" stroke-width="0.9"/></svg>
<svg class="a" style="left:815px;top:709px" width="14" height="13" viewBox="0 0 14 13"><rect x="0.6" y="0.6" width="12.8" height="11.8" fill="none" stroke="#666" stroke-width="1.2"/><path d="M5 0.6v6.5M8.2 0.6v6.5M0.6 7h7.6" fill="none" stroke="#666" stroke-width="1.1"/></svg>
<div class="a" style="left:846px;top:715px;width:6px;height:2px;background:#555;"></div>
<div class="a" style="left:856px;top:715px;width:100px;height:1px;background:#999;"></div>
<div class="a" style="left:903.5px;top:710px;width:4px;height:12px;background:#666;"></div>
<div class="a" style="left:960px;top:715px;width:7px;height:2px;background:#555;"></div>
<div class="a" style="left:962.5px;top:711.5px;width:2px;height:9px;background:#555;"></div>
<div class="t" style="left:977.5px;top:709.5px;font-size:11px;color:#222;">100 %</div>
<div class="a" style="left:0px;top:0px;width:1px;height:728px;background:#217346;"></div>
<div class="a" style="left:0px;top:727px;width:1026px;height:1px;background:#217346;"></div></body></html>
